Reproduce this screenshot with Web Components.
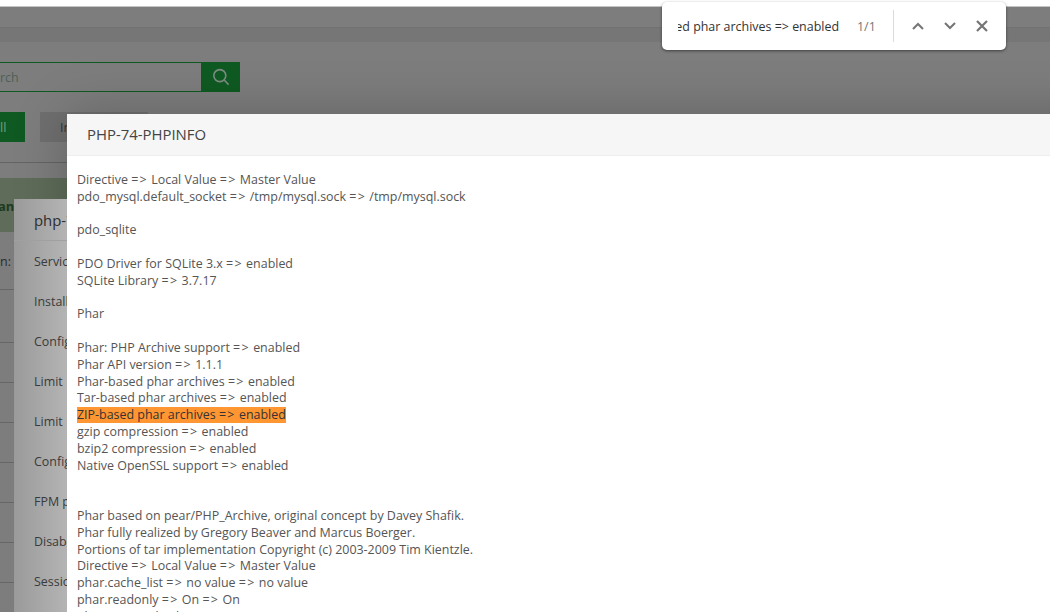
<!DOCTYPE html>
<html>
<head>
<meta charset="utf-8">
<style>
  html, body { margin: 0; height: 100%; overflow: hidden; background: #fff; }
  body { font-family: "Open Sans", "Noto Sans", sans-serif; font-size: 12.45px; }
</style>
</head>
<body>
<php-page>
  <php-dialog slot="back" title-text="php-74" variant="back">
    <php-row>Service</php-row>
    <php-row>Install</php-row>
    <php-row>Config</php-row>
    <php-row>Limit</php-row>
    <php-row>Limit</php-row>
    <php-row>Config</php-row>
    <php-row>FPM p</php-row>
    <php-row>Disab</php-row>
    <php-row>Session</php-row>
  </php-dialog>
  <php-dialog slot="front" title-text="PHP-74-PHPINFO" variant="front">
    <php-line>Directive => Local Value => Master Value</php-line>
    <php-line>pdo_mysql.default_socket => /tmp/mysql.sock => /tmp/mysql.sock</php-line>
    <php-line></php-line>
    <php-line>pdo_sqlite</php-line>
    <php-line></php-line>
    <php-line>PDO Driver for SQLite 3.x => enabled</php-line>
    <php-line>SQLite Library => 3.7.17</php-line>
    <php-line></php-line>
    <php-line>Phar</php-line>
    <php-line></php-line>
    <php-line>Phar: PHP Archive support => enabled</php-line>
    <php-line>Phar API version => 1.1.1</php-line>
    <php-line>Phar-based phar archives => enabled</php-line>
    <php-line>Tar-based phar archives => enabled</php-line>
    <php-line match>ZIP-based phar archives => enabled</php-line>
    <php-line>gzip compression => enabled</php-line>
    <php-line>bzip2 compression => enabled</php-line>
    <php-line>Native OpenSSL support => enabled</php-line>
    <php-line></php-line>
    <php-line></php-line>
    <php-line>Phar based on pear/PHP_Archive, original concept by Davey Shafik.</php-line>
    <php-line>Phar fully realized by Gregory Beaver and Marcus Boerger.</php-line>
    <php-line>Portions of tar implementation Copyright (c) 2003-2009 Tim Kientzle.</php-line>
    <php-line>Directive => Local Value => Master Value</php-line>
    <php-line>phar.cache_list => no value => no value</php-line>
    <php-line>phar.readonly => On => On</php-line>
    <php-line>phar.require_hash => On => On</php-line>
  </php-dialog>
  <find-bar slot="find" query="ed phar archives => enabled" count="1/1"></find-bar>
</php-page>
<script>
class PhpPage extends HTMLElement {
  constructor() {
    super();
    this.attachShadow({ mode: 'open' });
    this.shadowRoot.innerHTML = `
    <style>
      :host { display: block; position: relative; width: 1050px; height: 612px; overflow: hidden; background: #fff; color: #333; }
      .chrome { height: 6px; background: #fff; border-bottom: 1px solid #c4c4c4; }
      .back { height: 605px; background: #7d7d7d; display: flex; flex-direction: column; }
      .topbar { height: 20px; flex: none; }
      .band { height: 14px; flex: none; background: #767676; border-top: 1px solid #717171; }
      .search { display: flex; margin-top: 20px; height: 30px; flex: none; }
      .search .field { width: 201px; box-sizing: border-box; border: 1px solid #0f5a22; border-left: 0; border-right: 0; line-height: 30px; color: #4f6056; white-space: nowrap; }
      .search .btn { width: 39px; background: #0f5a22; display: flex; align-items: center; justify-content: center; }
      .tabs { display: flex; margin-top: 20px; height: 30px; flex: none; gap: 15px; }
      .tab { line-height: 32px; overflow: hidden; }
      .tab.on { width: 25px; background: #0f5a22; color: #7c9b7f; }
      .tab.off { width: 88px; background: #6f6f6f; color: #333; padding-left: 20px; }
      .rule { height: 1px; flex: none; background: #646464; margin-top: 20px; }
      .greenrow { height: 54px; flex: none; margin-top: 15px; background: #5e6c59; color: #1d3a20; font-weight: 700; font-size: 13px; overflow: hidden; }
      .greenrow span { display: block; margin: 20px 0 0 -2px; line-height: 16px; }
      .labels { flex: 1; display: grid; grid-template-rows: 58px 53px repeat(7, 40px); width: 14px; }
      .labels div { color: #2b2b2b; border-bottom: 1px solid #666; box-sizing: border-box; padding-top: 22px; line-height: 16px; white-space: nowrap; overflow: hidden; }
      .shade { position: absolute; left: 67px; top: 114px; width: 1100px; height: 600px; box-shadow: 0 0 50px rgba(0,0,0,.22); }
    </style>
    <div class="chrome"></div>
    <div class="back">
      <div class="topbar"></div>
      <div class="band"></div>
      <div class="search">
        <div class="field">rch</div>
        <div class="btn">
          <svg width="18" height="18" viewBox="0 0 18 18" fill="none" stroke="#7d8c82" stroke-width="1.6"><circle cx="7.8" cy="7.6" r="6"/><path d="M12.2 12l4.4 4.6"/></svg>
        </div>
      </div>
      <div class="tabs">
        <div class="tab on">ll</div>
        <div class="tab off">In</div>
      </div>
      <div class="rule"></div>
      <div class="greenrow"><span>an</span></div>
      <div class="labels"><div>n:</div><div></div><div></div><div></div><div></div><div></div><div></div><div></div><div></div></div>
    </div>
    <div class="shade"></div>
    <slot name="back"></slot>
    <slot name="front"></slot>
    <slot name="find"></slot>
    `;
  }
}

class PhpDialog extends HTMLElement {
  constructor() {
    super();
    this.attachShadow({ mode: 'open' });
    this.shadowRoot.innerHTML = `
    <style>
      :host { display: flex; flex-direction: column; position: absolute; overflow: hidden; }
      :host([variant="front"]) { left: 67px; top: 114px; width: 1100px; height: 498px; background: #fff; z-index: 3; }
      :host([variant="back"]) { left: 14px; top: 199px; width: 53px; height: 413px; background: linear-gradient(90deg, #9a9a9a, #b4b4b4); z-index: 2; }
      header { flex: none; box-sizing: border-box; color: #444; font-size: 14.9px; white-space: nowrap; }
      :host([variant="front"]) header { height: 42px; background: #f6f6f6; border-bottom: 1px solid #eee; padding-left: 20px; line-height: 41px; }
      :host([variant="back"]) header { height: 42px; border-bottom: 1px solid #a0a0a0; padding-left: 20px; line-height: 43px; color: #2e2e2e; }
      .body { flex: 1; }
      :host([variant="front"]) .body { padding: 16px 10px; color: #555; white-space: nowrap; }
    </style>
    <header></header>
    <div class="body"><slot></slot></div>
    `;
  }
  connectedCallback() {
    this.shadowRoot.querySelector('header').textContent = this.getAttribute('title-text');
  }
}

class PhpRow extends HTMLElement {
  constructor() {
    super();
    this.attachShadow({ mode: 'open' });
    this.shadowRoot.innerHTML = `
    <style>
      :host { display: block; height: 40px; padding: 1px 0 0 20px; box-sizing: border-box; line-height: 40px; color: #3a3a3a; white-space: nowrap; }
    </style>
    <slot></slot>
    `;
  }
}

// one line of phpinfo output, the => gets a bit more room like in the original font
class PhpLine extends HTMLElement {
  constructor() {
    super();
    this.attachShadow({ mode: 'open' });
  }
  connectedCallback() {
    const text = this.textContent.replace(/&/g, '&amp;').replace(/</g, '&lt;').replace(/>/g, '&gt;');
    const html = text.split('=&gt;').join('<i>=&gt;</i>');
    this.shadowRoot.innerHTML = `
    <style>
      :host { display: block; height: 16.8px; line-height: 16.8px; }
      i { font-style: normal; letter-spacing: 1.3px; }
      mark { display: inline-block; vertical-align: top; line-height: 16px; background: #ff9632; color: #333; }
    </style>
    ${this.hasAttribute('match') ? `<mark>${html}</mark>` : html}
    `;
  }
}

class FindBar extends HTMLElement {
  constructor() {
    super();
    this.attachShadow({ mode: 'open' });
    this.shadowRoot.innerHTML = `
    <style>
      :host { position: absolute; left: 662px; top: 2px; z-index: 5; width: 344px; height: 48px; box-sizing: border-box; display: flex; align-items: center; background: #fff; border-radius: 5px; box-shadow: 0 1px 3px rgba(0,0,0,.5); color: #333; }
      .q { width: 161px; margin-left: 16px; overflow: hidden; white-space: nowrap; display: flex; justify-content: flex-end; }
      .c { width: 36px; margin-left: 18px; color: #757575; }
      .sep { width: 1px; height: 32px; background: #dadada; }
      button { all: unset; display: flex; width: 32px; height: 32px; align-items: center; justify-content: center; }
      .icons { display: flex; margin-left: 8px; }
    </style>
    <div class="q"><span></span></div><span class="c"></span><span class="sep"></span>
    <div class="icons">
      <button><svg width="12" height="8" viewBox="0 0 12 8" fill="none" stroke="#757575" stroke-width="2"><path d="M1 7l5-5 5 5"/></svg></button>
      <button><svg width="12" height="8" viewBox="0 0 12 8" fill="none" stroke="#757575" stroke-width="2"><path d="M1 1l5 5 5-5"/></svg></button>
      <button><svg width="12" height="12" viewBox="0 0 12 12" fill="none" stroke="#757575" stroke-width="2.2"><path d="M1 1l10 10M11 1L1 11"/></svg></button>
    </div>
    `;
  }
  connectedCallback() {
    this.shadowRoot.querySelector('.q span').textContent = this.getAttribute('query');
    this.shadowRoot.querySelector('.c').textContent = this.getAttribute('count');
  }
}

customElements.define('php-page', PhpPage);
customElements.define('php-dialog', PhpDialog);
customElements.define('php-row', PhpRow);
customElements.define('php-line', PhpLine);
customElements.define('find-bar', FindBar);
</script>
</body>
</html>
